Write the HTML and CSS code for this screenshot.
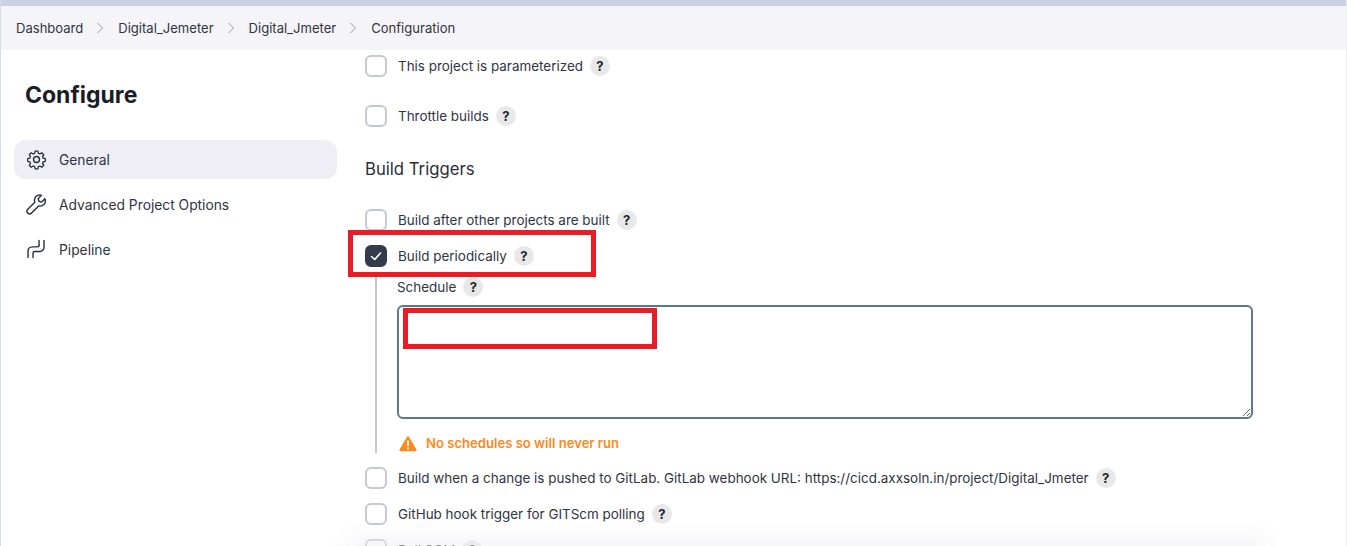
FILE: index.html
```html
<!DOCTYPE html>
<html lang="en">
<head>
<meta charset="utf-8">
<title>Configuration</title>
<link rel="stylesheet" href="styles.css">
</head>
<body>
<div class="topstrip"></div>
<nav class="crumbs">
  <span>Dashboard</span>
  <svg class="chev" viewBox="0 0 10 12"><path d="M2.500 1 7.500 6l-5 5"/></svg>
  <span>Digital_Jemeter</span>
  <svg class="chev" viewBox="0 0 10 12"><path d="M2.500 1 7.500 6l-5 5"/></svg>
  <span>Digital_Jmeter</span>
  <svg class="chev" viewBox="0 0 10 12"><path d="M2.500 1 7.500 6l-5 5"/></svg>
  <span>Configuration</span>
</nav>
<div class="layout">
  <aside class="side">
    <h1 class="title">Configure</h1>
    <ul class="menu">
      <li class="item active">
        <svg class="ico" viewBox="0 0 24 24"><path d="M10.300 2.600h3.400l.6 2.700 1.900.8 2.400-1.500 2.400 2.400-1.500 2.400.8 1.900 2.700.6v3.400l-2.700.6-.8 1.900 1.500 2.400-2.400 2.400-2.400-1.500-1.900.8-.6 2.700h-3.400l-.6-2.700-1.900-.8-2.400 1.500-2.400-2.400 1.500-2.400-.8-1.900-2.700-.6v-3.400l2.700-.6.8-1.900-1.500-2.400 2.400-2.400 2.400 1.500 1.900-.8z" transform="translate(12 12) scale(.92) translate(-12 -13)"/><circle cx="12" cy="12" r="3.400"/></svg>
        <span>General</span>
      </li>
      <li class="item">
        <svg class="ico" viewBox="0 0 24 24"><path d="M21.600 5.400 17.800 9.200l-3-.9-.9-3L17.700 1.500a6 6 0 0 0-7.600 7.800L2 17.400a3 3 0 0 0 4.300 4.300l8.200-8.100a6 6 0 0 0 7.100-8.200z"/></svg>
        <span>Advanced Project Options</span>
      </li>
      <li class="item">
        <svg class="ico" viewBox="0 0 24 24"><path d="M2.300 21.100v-7.400a4.700 4.700 0 0 1 4.600-4.700h5.700a2.300 2.300 0 0 0 2.300-3.300v-4"/><path d="M8 21.100v-4.500a2.300 2.300 0 0 1 2.300-2.300H16a4.600 4.600 0 0 0 4.600-4.600v-8"/></svg>
        <span>Pipeline</span>
      </li>
    </ul>
  </aside>
  <main class="content">
    <div class="row row-first"><span class="box"></span><span>This project is parameterized</span><span class="help">?</span></div>
    <div class="row row-throttle"><span class="box"></span><span>Throttle builds</span><span class="help">?</span></div>
    <h2 class="section">Build Triggers</h2>
    <div class="row row-after"><span class="box"></span><span>Build after other projects are built</span><span class="help">?</span></div>
    <div class="row row-period">
      <span class="box checked"><svg viewBox="0 0 22 22"><path d="M6.500 11.500 9.700 14.500 15.500 8"/></svg></span>
      <span>Build periodically</span><span class="help">?</span>
    </div>
    <div class="nested">
      <div class="sched-label"><span>Schedule</span><span class="help">?</span></div>
      <div class="area-wrap"><textarea class="area" aria-label="Schedule"></textarea></div>
      <div class="warn">
        <svg class="warn-ico" viewBox="0 0 18 16"><path class="tri" d="M9 .8c.5 0 .9.3 1.100.7l7.300 12.600c.5.8-.1 1.700-1 1.700H1.600c-.9 0-1.500-.9-1-1.700L7.900 1.500C8.100 1.100 8.500.8 9 .8z"/><rect class="mark" x="8.100" y="5" width="1.800" height="5.500" rx=".8"/><circle class="mark" cx="9" cy="12.800" r="1.100"/></svg>
        <span>No schedules so will never run</span>
      </div>
    </div>
    <div class="row row-gitlab"><span class="box"></span><span>Build when a change is pushed to GitLab. GitLab webhook URL: https://cicd.axxsoln.in/project/Digital_Jmeter</span><span class="help">?</span></div>
    <div class="row row-github"><span class="box"></span><span>GitHub hook trigger for GITScm polling</span><span class="help">?</span></div>
    <div class="row row-scm"><span class="box"></span><span>Poll SCM</span><span class="help">?</span></div>
  </main>
</div>
<div class="fade"></div>
<div class="mark-red mark-one"></div>
<div class="mark-red mark-two"></div>
</body>
</html>
```
FILE: styles.css
```css
* { box-sizing: border-box; }
html, body { margin: 0; height: 546px; overflow: hidden; }
body {
  position: relative;
  background: #fff;
  color: #2f3442;
  font-family: Inter, "Noto Sans", sans-serif;
  font-size: 13px;
  border-left: 1px solid #d5dcea;
  border-right: 1px solid #eeeef3;
}
.topstrip { height: 6px; background: #c9d2e4; margin-left: -1px; margin-right: -1px; }
.crumbs {
  height: 44px;
  background: #f5f5f9;
  display: flex;
  align-items: center;
  padding: 0 0 0 15px;
  color: #30343f;
  font-size: 13.050px;
}
.chev { width: 10px; height: 12px; margin: 0 13px 0 12px; fill: none; stroke: #9a9da6; stroke-width: 1; }
.layout { display: flex; }
.side { width: 350px; flex: none; padding: 0 14px 0 13px; }
.title { margin: 30px 0 0 11px; font-size: 23px; line-height: 30px; font-weight: 700; color: #1a1d27; }
.menu { list-style: none; margin: 30px 0 0; padding: 0; display: flex; flex-direction: column; gap: 6px; font-size: 13.800px; }
.item {
  height: 39px;
  display: flex;
  align-items: center;
  gap: 12px;
  padding-left: 12px;
  border-radius: 12px;
}
.item.active { background: #eeeef4; }
.ico { width: 21px; height: 21px; flex: none; fill: none; stroke: #2b2e38; stroke-width: 1.600; stroke-linecap: round; stroke-linejoin: round; }
.content { flex: 1; padding-left: 14px; font-size: 13.450px; }
.row { display: flex; align-items: center; height: 22px; }
.box {
  width: 22px; height: 22px; flex: none;
  margin-right: 11px;
  border: 2px solid #c3c8d2;
  border-radius: 6px;
  background: #fff;
}
.box.checked { background: #333b4d; border-color: #333b4d; }
.box.checked svg { display: block; width: 22px; height: 22px; margin: -2px; fill: none; stroke: #fff; stroke-width: 1.600; stroke-linecap: round; stroke-linejoin: round; }
.help {
  width: 20px; height: 20px; flex: none;
  margin-left: 7px;
  border-radius: 50%;
  background: #e8e8e8;
  color: #22252e;
  font-size: 13px;
  font-weight: 700;
  display: flex; align-items: center; justify-content: center;
}
.row-first { margin-top: 5px; }
.row-throttle { margin-top: 28px; }
.section { margin: 30px 0 0; font-size: 16.700px; line-height: 24px; font-weight: 400; color: #2a2e3a; }
.row-after { margin-top: 28px; }
.row-period { margin-top: 14px; }
.nested { margin: 5px 0 0 10px; height: 181px; padding-left: 20px; border-left: 2px solid #c3c8d2; width: 888px; }
.sched-label { display: flex; align-items: center; height: 30px; }
.area-wrap { margin-top: 3px; height: 114px; }
.area {
  display: block;
  width: 856px; height: 114px;
  border: 2px solid #5f7787;
  border-radius: 6px;
  background: #fff;
  outline: none;
  margin: 0;
}
.warn {
  margin-top: 14px;
  display: flex; align-items: center; gap: 9px;
  height: 20px;
  padding-left: 2px;
  color: #fb8a1e;
  font-size: 13.100px;
  font-weight: 600;
}
.warn-ico { width: 18px; height: 17px; flex: none; }
.tri { fill: #fb8a1e; }
.mark { fill: #fff; }
.row-gitlab { margin-top: 14px; }
.row-github { margin-top: 14px; }
.row-scm { margin-top: 14px; }
.fade {
  position: absolute;
  left: 330px; width: 950px; top: 522px; height: 24px;
  background: linear-gradient(to bottom, rgba(238,238,243,0), rgba(238,238,243,.5));
  -webkit-mask-image: linear-gradient(to right, transparent, #000 30px, #000 920px, transparent);
  mask-image: linear-gradient(to right, transparent, #000 30px, #000 920px, transparent);
  pointer-events: none;
}
.mark-red { position: absolute; border: 5px solid #ed1c24; pointer-events: none; }
.mark-one { left: 347px; top: 230px; width: 248px; height: 47px; }
.mark-two { left: 402px; top: 308px; width: 254px; height: 41px; }
```
